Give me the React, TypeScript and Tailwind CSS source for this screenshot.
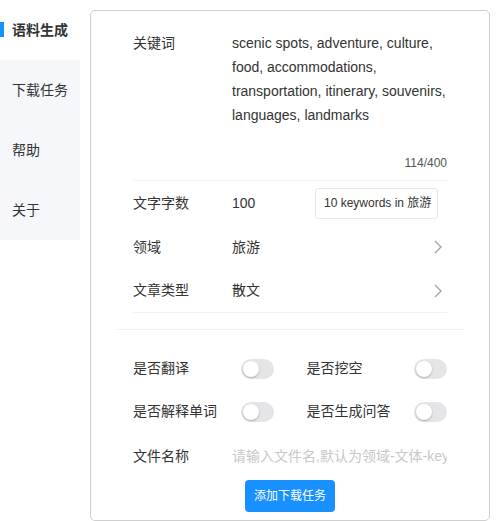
import React from "react";

const font = { fontFamily: '"Liberation Sans", Arial, "Noto Sans CJK SC", sans-serif' };

function Chevron() {
  return (
    <svg width="8" height="14" viewBox="0 0 8 14" fill="none" className="mr-[5px]">
      <path d="M1 1l6 6-6 6" stroke="#a0a0a0" strokeWidth="1.3" />
    </svg>
  );
}

function Switch() {
  return (
    <div className="relative w-[33px] h-[20px] rounded-full bg-[#e5e5e7] shrink-0">
      <div className="absolute left-[2px] top-[2px] w-[16px] h-[16px] rounded-full bg-white shadow-[0_1px_2px_rgba(0,0,0,0.25)]" />
    </div>
  );
}

export default function App() {
  return (
    <div className="flex w-[500px] h-[521px] bg-white text-[#333] text-[14px]" style={font}>
      <div className="w-[80px] shrink-0 flex flex-col">
        <div className="relative h-[60px] flex items-center pl-[12px] font-bold bg-white">
          <div className="absolute left-0 top-[22px] w-[4px] h-[15px] bg-[#1890ff]" />
          语料生成
        </div>
        <div className="bg-[#f5f7fa]">
          <div className="h-[60px] flex items-center pl-[12px]">下载任务</div>
          <div className="h-[60px] flex items-center pl-[12px]">帮助</div>
          <div className="h-[60px] flex items-center pl-[12px]">关于</div>
        </div>
      </div>
      <div className="ml-[10px] mt-[10px] w-[400px] h-[511px] border border-[#cfcfcf] rounded-[5px] flex flex-col">
        <div className="px-[42px] pt-[20px]">
          <div className="flex">
            <div className="w-[99px] shrink-0 leading-[24px]">关键词</div>
            <div className="leading-[24px] flex-1">
              scenic spots, adventure, culture, food, accommodations, transportation, itinerary, souvenirs, languages, landmarks
            </div>
          </div>
          <div className="text-right text-[12px] text-[#555] leading-[16px] mt-[28px] mb-[9px]">114/400</div>
          <div className="border-t border-[#f0f0f0]">
            <div className="h-[44px] flex items-center">
              <div className="w-[99px] shrink-0">文字字数</div>
              <div className="flex-1">100</div>
              <div className="w-[123px] h-[31px] border border-[#e8e8e8] rounded-[3px] flex items-center pl-[8px] text-[12px] mr-[9px] whitespace-nowrap">
                10 keywords in 旅游
              </div>
            </div>
            <div className="h-[44px] flex items-center">
              <div className="w-[99px] shrink-0">领域</div>
              <div className="flex-1">旅游</div>
              <Chevron />
            </div>
            <div className="h-[44px] flex items-center border-b border-[#f0f0f0]">
              <div className="w-[99px] shrink-0">文章类型</div>
              <div className="flex-1">散文</div>
              <Chevron />
            </div>
          </div>
        </div>
        <div className="mx-[26px] mt-[16px] border-t border-[#f0f0f0]" />
        <div className="px-[42px] pt-[17px]">
          <div className="grid grid-cols-2 gap-x-[33px]">
            <div className="h-[43px] flex items-center justify-between">
              <span>是否翻译</span>
              <Switch />
            </div>
            <div className="h-[43px] flex items-center justify-between">
              <span>是否挖空</span>
              <Switch />
            </div>
            <div className="h-[43px] flex items-center justify-between">
              <span>是否解释单词</span>
              <Switch />
            </div>
            <div className="h-[43px] flex items-center justify-between">
              <span>是否生成问答</span>
              <Switch />
            </div>
          </div>
          <div className="h-[46px] flex items-center">
            <div className="w-[99px] shrink-0">文件名称</div>
            <div className="flex-1 overflow-hidden whitespace-nowrap text-[#c8c8c8]">请输入文件名,默认为领域-文体-keywords</div>
          </div>
          <div className="flex justify-center mt-[1px]">
            <button className="w-[90px] h-[32px] rounded-[4px] bg-[#1890ff] text-white text-[12px]">添加下载任务</button>
          </div>
        </div>
      </div>
    </div>
  );
}
